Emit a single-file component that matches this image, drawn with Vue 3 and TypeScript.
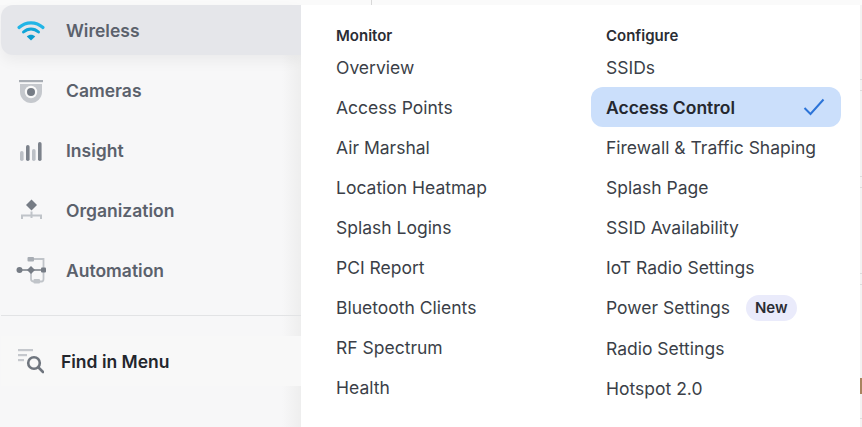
<script setup lang="ts">
interface NavItem {
  label: string
  icon: string
}

interface ConfigItem {
  label: string
  active?: boolean
  badge?: string
}

const navItems: NavItem[] = [
  { label: 'Wireless', icon: 'wifi' },
  { label: 'Cameras', icon: 'camera' },
  { label: 'Insight', icon: 'insight' },
  { label: 'Organization', icon: 'org' },
  { label: 'Automation', icon: 'automation' },
]

const monitorItems = [
  'Overview',
  'Access Points',
  'Air Marshal',
  'Location Heatmap',
  'Splash Logins',
  'PCI Report',
  'Bluetooth Clients',
  'RF Spectrum',
  'Health',
]

const configureItems: ConfigItem[] = [
  { label: 'SSIDs' },
  { label: 'Access Control', active: true },
  { label: 'Firewall & Traffic Shaping' },
  { label: 'Splash Page' },
  { label: 'SSID Availability' },
  { label: 'IoT Radio Settings' },
  { label: 'Power Settings', badge: 'New' },
  { label: 'Radio Settings' },
  { label: 'Hotspot 2.0' },
]
</script>

<template>
  <div class="screen">
    <div class="top-strip">
      <span class="strip-line"></span>
    </div>
    <div class="main">
      <aside class="sidebar">
        <a
          v-for="(item, i) in navItems"
          :key="item.label"
          class="nav-item"
          :class="{ selected: i === 0 }"
        >
          <span class="nav-icon">
            <svg v-if="item.icon === 'wifi'" width="30" height="24" viewBox="0 0 30 24">
              <path d="M3 9.5C10 3.2 20 3.2 27 9.5" fill="none" stroke="#22b5e6" stroke-width="3.2" stroke-linecap="round" />
              <path d="M7.5 14C12 10 18 10 22.5 14" fill="none" stroke="#10a5d8" stroke-width="3" stroke-linecap="round" />
              <path d="M15 22.5L10.8 18.4C13 16.2 17 16.2 19.2 18.4Z" fill="#0a9ccf" />
            </svg>
            <svg v-else-if="item.icon === 'camera'" width="30" height="26" viewBox="0 0 30 26">
              <rect x="3" y="3" width="24" height="2.2" fill="#a8adb4" />
              <path d="M4 7H26V15C26 21 21 26 15 26S4 21 4 15Z" fill="#c5c8cd" />
              <circle cx="15" cy="15" r="6.2" fill="#fafafa" />
              <circle cx="15" cy="15" r="4" fill="#767c85" />
            </svg>
            <svg v-else-if="item.icon === 'insight'" width="30" height="24" viewBox="0 0 30 24">
              <rect x="4" y="13" width="3.6" height="10" rx="1.8" fill="#bcc0c6" />
              <rect x="10" y="7" width="3.6" height="16" rx="1.8" fill="#7c828b" />
              <rect x="16" y="11" width="3.6" height="12" rx="1.8" fill="#bcc0c6" />
              <rect x="22" y="4" width="3.6" height="19" rx="1.8" fill="#7c828b" />
            </svg>
            <svg v-else-if="item.icon === 'org'" width="30" height="26" viewBox="0 0 30 26">
              <path d="M15.5 2.5L21 8L15.5 13.5L10 8Z" fill="#767c85" />
              <path d="M6 22V18.5H25V22M15.5 14.5V21" fill="none" stroke="#c0c4c9" stroke-width="2" />
            </svg>
            <svg v-else-if="item.icon === 'automation'" width="32" height="28" viewBox="0 0 32 28">
              <path d="M17 3H28.5V14M16 14V23C16 25 17 25.5 19 25.5H26.5C28 25.5 28.5 25 28.5 23V14" fill="none" stroke="#c0c4c9" stroke-width="1.8" />
              <rect x="12.5" y="1" width="6.5" height="4.5" rx="1" fill="#a8adb4" />
              <rect x="18.5" y="23" width="6.5" height="4.5" rx="1" fill="#c0c4c9" />
              <path d="M4 14H29" stroke="#767c85" stroke-width="1.5" />
              <circle cx="4.5" cy="14" r="3" fill="#767c85" />
              <path d="M16 10L20 14L16 18L12 14Z" fill="#767c85" />
              <rect x="26" y="11.5" width="5" height="5" rx="1" fill="#767c85" />
            </svg>
          </span>
          <span class="nav-label">{{ item.label }}</span>
        </a>
        <hr class="divider" />
        <a class="find">
          <svg class="find-icon" width="28" height="26" viewBox="0 0 28 26">
            <rect x="2" y="1" width="15" height="2.2" fill="#c5c8cd" />
            <rect x="2" y="6" width="9" height="2.2" fill="#c5c8cd" />
            <rect x="2" y="11" width="6" height="2.2" fill="#c5c8cd" />
            <circle cx="18" cy="15" r="5.8" fill="none" stroke="#6f757e" stroke-width="2.6" />
            <path d="M22.5 19.5L27 24" stroke="#6f757e" stroke-width="2.6" stroke-linecap="round" />
          </svg>
          <span>Find in Menu</span>
        </a>
      </aside>

      <section class="panel">
        <div class="col monitor">
          <h3 class="col-title">Monitor</h3>
          <a v-for="label in monitorItems" :key="label" class="link">{{ label }}</a>
        </div>
        <div class="col configure">
          <h3 class="col-title">Configure</h3>
          <a
            v-for="item in configureItems"
            :key="item.label"
            class="link"
            :class="{ active: item.active, tall: item.badge }"
          >
            {{ item.label }}
            <span v-if="item.badge" class="badge">{{ item.badge }}</span>
            <svg v-if="item.active" class="check" width="22" height="18" viewBox="0 0 22 18">
              <path d="M1.5 10L7.5 16L20.5 1.5" fill="none" stroke="#2c74d8" stroke-width="2" />
            </svg>
          </a>
        </div>
      </section>
      <div class="edge"></div>
    </div>
  </div>
</template>

<style scoped>
.screen {
  width: 862px;
  height: 427px;
  overflow: hidden;
  background: #fff;
  font-family: Inter, "Liberation Sans", sans-serif;
}

.top-strip {
  height: 5px;
  background: #fafafa;
  padding-left: 371px;
}

.strip-line {
  display: block;
  width: 1px;
  height: 5px;
  background: #d8d8d8;
}

.main {
  display: flex;
  height: 422px;
}

.sidebar {
  width: 301px;
  flex: none;
  box-sizing: border-box;
  padding-left: 1px;
  background: linear-gradient(90deg, #f7f7f8 0, #f7f7f8 282px, #eeeeee 301px);
}

.nav-item {
  height: 50px;
  margin-bottom: 10px;
  display: flex;
  align-items: center;
  font-size: 17.5px;
  font-weight: 600;
  color: #5b616c;
}

.nav-item.selected {
  background: #e5e6ea;
  border-radius: 12px 0 0 12px;
  box-shadow: 0 6px 14px rgba(0, 0, 0, 0.05);
}

.nav-icon {
  width: 65px;
  flex: none;
  display: flex;
  justify-content: center;
  padding-right: 6px;
  box-sizing: border-box;
}

.divider {
  margin: 20px 0 0;
  border: none;
  border-top: 1px solid #e2e3e5;
}

.find {
  margin-top: 20px;
  height: 50px;
  display: flex;
  align-items: center;
  font-size: 17.5px;
  font-weight: 600;
  color: #23262d;
  background: #f8f8f8;
}

.find-icon {
  margin-left: 15px;
  margin-right: 17px;
  flex: none;
}

.panel {
  width: 559px;
  flex: none;
  display: flex;
  background: #fff;
  border-radius: 0 14px 0 0;
  box-sizing: border-box;
  padding-top: 20px;
}

.col {
  display: flex;
  flex-direction: column;
}

.monitor {
  width: 290px;
  padding-left: 35px;
  box-sizing: border-box;
}

.configure {
  width: 250px;
}

.col-title {
  margin: 0;
  height: 22px;
  line-height: 21px;
  font-size: 15px;
  font-weight: 600;
  color: #2a2d34;
}

.configure .col-title,
.configure .link {
  padding-left: 15px;
}

.link {
  height: 40px;
  display: flex;
  align-items: center;
  font-size: 17.5px;
  color: #3b3f48;
  box-sizing: border-box;
}

.link.tall {
  height: 41px;
}

.link.active {
  background: #cbdffb;
  border-radius: 12px;
  font-weight: 600;
  color: #25282f;
  justify-content: space-between;
  padding-right: 16px;
}

.badge {
  margin-left: 16px;
  padding: 0 9px;
  height: 26px;
  line-height: 26px;
  border-radius: 13px;
  background: #eaebfb;
  font-size: 15px;
  font-weight: 600;
  color: #2a2d34;
}

.edge {
  flex: 1;
  background: linear-gradient(
    180deg,
    #f3f3f3 0 74px,
    #dcdcdc 74px 75px,
    #f3f3f3 75px 85px,
    #dcdcdc 85px 86px,
    #f3f3f3 86px 171px,
    #dcdcdc 171px 172px,
    #f3f3f3 172px 182px,
    #dcdcdc 182px 183px,
    #f3f3f3 183px 268px,
    #dcdcdc 268px 269px,
    #f3f3f3 269px 279px,
    #dcdcdc 279px 280px,
    #f3f3f3 280px 373px,
    #a8845f 373px 389px,
    #f3f3f3 389px 413px,
    #dcdcdc 413px 414px,
    #f3f3f3 414px
  );
}
</style>

<style>
html,
body {
  margin: 0;
  background: #fff;
}
</style>
